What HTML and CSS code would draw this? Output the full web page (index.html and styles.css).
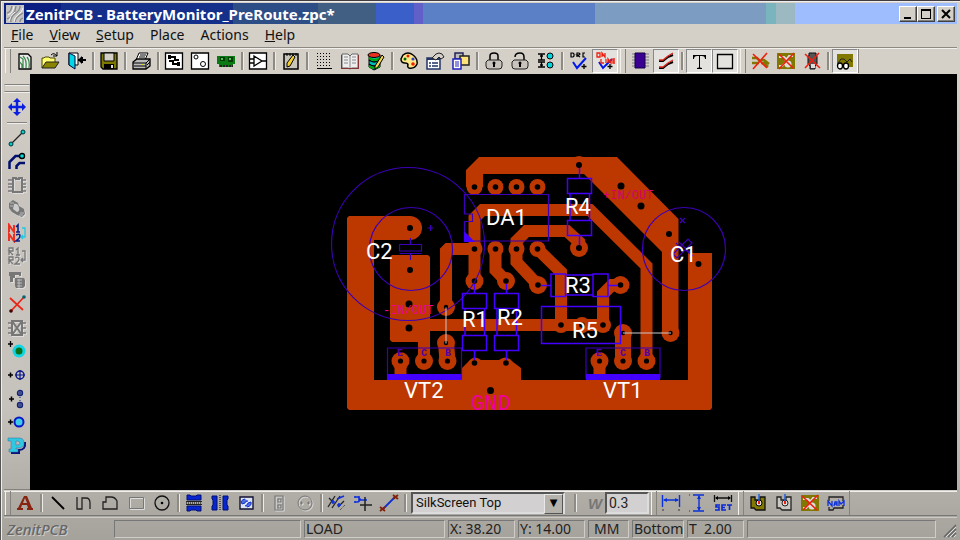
FILE: index.html
```html
<!DOCTYPE html>
<html lang="en">
<head>
<meta charset="utf-8">
<title>ZenitPCB - BatteryMonitor_PreRoute.zpc*</title>
<link rel="stylesheet" href="styles.css">
</head>
<body>
<div class="window">
  <header class="titlebar">
    <svg class="logo" viewBox="0 0 18 18"><path fill="#c4c4c4" d="M0 0h18v18H0z"/><path d="M1 8Q5 7 6 1M1 14Q9 11 10 1M5 17Q4 12 10 8Q14 5 14 1M9 17Q10 12 17 8M14 17Q14 14 17 13" fill="none" stroke="#888" stroke-width="1.300"/><path d="M2 10Q7 8 8 1M3 16Q4 11 9 7M8 17Q8 12 13 9Q16 7 17 3" fill="none" stroke="#f4f4f4" stroke-width="1"/></svg>
    <h1>ZenitPCB - BatteryMonitor_PreRoute.zpc*</h1>
    <div class="winbtns">
      <button aria-label="Minimize"><svg viewBox="0 0 14 12"><path d="M3 9h7v2H3z"/></svg></button>
      <button aria-label="Maximize"><svg viewBox="0 0 14 12"><path d="M2 1h10v10H2zM3 3v7h8V3z" fill-rule="evenodd"/></svg></button>
      <button aria-label="Close" class="close"><svg viewBox="0 0 14 12"><path d="M3 2l8 8M11 2l-8 8" stroke="#000" stroke-width="2"/></svg></button>
    </div>
  </header>
  <nav class="menu">
    <a href="#"><u>F</u>ile</a><a href="#"><u>V</u>iew</a><a href="#"><u>S</u>etup</a><a href="#">Place</a><a href="#">Actions</a><a href="#"><u>H</u>elp</a>
  </nav>
  <div class="toolbar top" role="toolbar" aria-label="Main">
    <span class="grip first"></span>
    <button aria-label="New"><svg viewBox="0 0 20 20"><path d="M4 3h9l3 3v12H4z" fill="#eee" stroke="#000" stroke-width="1.300"/><path d="M5 6l3 2v9M8 5q4 4 3 12M12 6q3 4 2 11M5 11l2 3v3" fill="none" stroke="#3f8a4c" stroke-width="1.300"/></svg></button>
    <button aria-label="Open"><svg viewBox="0 0 20 20"><path d="M1 17V7h2l1-1h4l1 1h5v4" fill="#ffff70" stroke="#4a4600"/><path d="M1 17l4-6h13l-4 6z" fill="#8a8400" stroke="#222"/><path d="M10 4q3-3 6 1M16 1v4h-4" fill="none" stroke="#000"/></svg></button>
    <button aria-label="Exit"><svg viewBox="0 0 20 20"><path d="M2 2h9v12H2z" fill="#fff" stroke="#000"/><path d="M2 2l6 3v13l-6-4z" fill="#00d8e8" stroke="#003"/><path d="M11 9h8M15 6v6" stroke="#000" stroke-width="2"/><path d="M11 9l4-4v8z"/></svg></button>
    <span class="sep narrow"></span>
    <button aria-label="Save"><svg viewBox="0 0 20 20"><path d="M2 2h16v16H4l-2-2z" fill="#7c7800" stroke="#000" stroke-width="1.300"/><path d="M5 2h10v8H5z" fill="#d4d0c8" stroke="#000"/><path d="M5 13h10v5H5z"/><path d="M12 14h2v3h-2z" fill="#ddd"/></svg></button>
    <span class="sep"></span>
    <button aria-label="Print"><svg viewBox="0 0 20 20"><path d="M7 2h9l-3 7H4z" fill="#fff" stroke="#000"/><path d="M8 4h6M7 6h6" stroke="#000"/><path d="M1 11l4-3h13v7l-4 3H1z" fill="#bbb" stroke="#000" stroke-width="1.300"/><path d="M1 12h13l4-4M14 12v6M2 15h12M15 14l3-3" fill="none" stroke="#000"/><path d="M9 13h3v1H9z" fill="#dd0"/></svg></button>
    <span class="sep narrow"></span>
    <button aria-label="Tracks view"><svg viewBox="0 0 20 20"><path d="M1.500 2h17v16h-17z" fill="#fff" stroke="#000" stroke-width="1.300"/><path d="M4 6h7v3h4M5 10h4v3h6" fill="none" stroke="#000" stroke-width="2"/><path d="M4 4h3v4H4zM13 11h3v4h-3z"/></svg></button>
    <button aria-label="Pads view"><svg viewBox="0 0 20 20"><path d="M1.500 2h17v16h-17z" fill="#fff" stroke="#000" stroke-width="1.300"/><circle cx="6" cy="6" r="2" fill="none" stroke="#000"/><circle cx="13" cy="13" r="2.500" fill="none" stroke="#000"/></svg></button>
    <button aria-label="Board"><svg viewBox="0 0 20 20"><path d="M1 5h18v8h-2v3H3v-3H1z" fill="#0a7a14"/><path d="M4 6h5v4H4zM12 6h5v5h-5z" fill="#033d08"/><path d="M5 7h2v2H5zM13 7h2v2h-2z" fill="#5ac05a"/><path d="M4 15h13" stroke="#222" stroke-width="2" stroke-dasharray="2 1"/></svg></button>
    <span class="sep narrow"></span>
    <button aria-label="Schematic"><svg viewBox="0 0 20 20"><path d="M1.500 2h17v16h-17z" fill="#fff" stroke="#000" stroke-width="1.300"/><path d="M6 5l8 5-8 5zM2 8h4M2 12h4M14 10h4" fill="none" stroke="#000" stroke-width="1.300"/></svg></button>
    <span class="sep"></span>
    <button aria-label="Edit"><svg viewBox="0 0 20 20"><path d="M3 3h14v15H3z" fill="#c9c5bc" stroke="#000" stroke-width="1.500"/><path d="M6 2v3M9 2v3M12 2v3M15 2v3" stroke="#000"/><path d="M12 4l2 2-5 9-3 1 0-4z" fill="#f3cf30" stroke="#000"/></svg></button>
    <span class="sep"></span>
    <button aria-label="Grid"><svg viewBox="0 0 20 20" shape-rendering="crispEdges"><path d="M3 2.500h15M3 5.500h15M3 8.500h15M3 11.500h15M3 14.500h15" stroke="#000" stroke-dasharray="1 2"/><path d="M3 17.500h15" stroke="#000"/></svg></button>
    <button aria-label="Library"><svg viewBox="0 0 20 20"><path d="M2 3h6l2 2 2-2h6v14h-6l-2 1-2-1H2z" fill="#eee" stroke="#666"/><path d="M10 5v12M4 6h4M4 9h4M4 12h4M12 6h4M12 9h4M12 12h4" stroke="#888"/><path d="M1 17.500h18M1.500 4v14M18.500 4v14" stroke="#833" fill="none"/></svg></button>
    <button aria-label="Library editor"><svg viewBox="0 0 20 20"><path d="M3 4v12l5 3 6-3V4z" fill="#0bb" stroke="#000"/><ellipse cx="8" cy="4" rx="6" ry="2.500" fill="#e83020" stroke="#000"/><path d="M3 7q5 4 11 0M3 15q5 4 11 0" fill="none" stroke="#0a0" stroke-width="2"/><path d="M3 9q5 4 11 0M3 13q5 4 11 0" fill="none" stroke="#000" stroke-width="1.300"/><path d="M16 4l2 2-6 10-3 2 0-3z" fill="#f5d550" stroke="#000"/></svg></button>
    <span class="sep"></span>
    <button aria-label="Colors"><svg viewBox="0 0 20 20"><path d="M4 4q5-4 10 0 5 4 4 9-2 5-8 4-2-1-1-3 0-2-3-2-4 0-4-4z" fill="#ffe88a" stroke="#000" stroke-width="1.500"/><circle cx="6" cy="8" r="1.500" fill="#060"/><circle cx="9" cy="5" r="1.500" fill="#e20"/><circle cx="14" cy="8" r="1.600" fill="#34c"/><circle cx="14" cy="13" r="1.800" fill="#e20"/></svg></button>
    <button aria-label="Properties"><svg viewBox="0 0 20 20"><path d="M2 7h13v11H2z" fill="#fff" stroke="#236" stroke-width="1.500"/><path d="M2 8h13" stroke="#236" stroke-width="2"/><path d="M4 12h2M7 12h6M4 15h2M7 15h6" stroke="#236" stroke-width="1.300"/><path d="M7 7l4-4q3-2 6 0l2 3-3 2-2-2-3 3z" fill="#d4d0c8" stroke="#222"/></svg></button>
    <button aria-label="Copy"><svg viewBox="0 0 20 20"><path d="M4 2h8v6H4z" fill="#bbb" stroke="#225" stroke-width="1.500"/><path d="M9 5h9v9H9z" fill="#ffe37a" stroke="#222" stroke-width="1.500"/><path d="M2 8h8v10H2z" fill="#fff" stroke="#22b" stroke-width="1.500"/><path d="M4 11h4M4 13h4M4 15h4" stroke="#22b"/></svg></button>
    <span class="sep"></span>
    <button aria-label="Lock"><svg viewBox="0 0 20 20"><path d="M6 9V5q0-3 4-3t4 3v4" fill="none" stroke="#000" stroke-width="1.500"/><path d="M4 9h12l2 2v4q0 3-3 3H5q-3 0-3-3v-4z" fill="#c8c4bc" stroke="#222"/><circle cx="10" cy="12" r="1.500"/><path d="M9 12h2v4H9z"/></svg></button>
    <button aria-label="Unlock"><svg viewBox="0 0 20 20"><path d="M5 6q0-4 5-4 4 0 4 4v3" fill="none" stroke="#000" stroke-width="1.500"/><path d="M4 9h12l2 2v4q0 3-3 3H5q-3 0-3-3v-4z" fill="#c8c4bc" stroke="#222"/><circle cx="10" cy="12" r="1.500"/><path d="M9 12h2v4H9z"/></svg></button>
    <button aria-label="Clearance"><svg viewBox="0 0 20 20"><path d="M2 3h7M2 9h7M2 11h7M2 16h7M5.500 3v6M5.500 11v5M4 5h3M4 14h3" stroke="#000" stroke-width="1.300"/><circle cx="14" cy="5" r="3" fill="#00d5df" stroke="#000"/><circle cx="14" cy="14" r="3" fill="#00d5df" stroke="#000"/></svg></button>
    <span class="sep"></span>
    <button aria-label="Design rule check"><svg viewBox="0 0 20 20"><path d="M2 2v4h2l1-1V3L4 2zM8 6V2h2l1 1-1 1H8l3 2M16 2h-2v4h2" fill="none" stroke="#000" stroke-width="1.200"/><path d="M4 11l4 6 9-10" fill="none" stroke="#0018e8" stroke-width="2"/><path d="M15 13v5M12.500 15.500h5" stroke="#000" stroke-width="1.300"/></svg></button>
    <button aria-label="Online check" class="on"><svg viewBox="0 0 20 20"><path d="M4 11l4 6 9-9" fill="none" stroke="#0018e8" stroke-width="2"/><path d="M2 2h3v4H2zM7 6V2l3 4V2M6 8v4h3M11 8v4M13 12V8l3 4V8M20 8h-2v4h2M18 10h2" fill="none" stroke="#f02010" stroke-width="1.300"/><path d="M15 13v5M12.500 15.500h5" stroke="#000" stroke-width="1.300"/></svg></button>
    <span class="grip"></span>
    <button aria-label="Component side"><svg viewBox="0 0 20 20"><path d="M2 3h17M2 6h17M2 9h17M2 12h17M2 15h17" stroke="#999" stroke-width="1.500"/><path d="M5 2h10v15H5z" fill="#3a0092" stroke="#15004a"/></svg></button>
    <button aria-label="Tracks" class="on"><svg viewBox="0 0 20 20"><path d="M3 10h4l5-4 5-2M3 17h4l5-4 5-2" fill="none" stroke="#000" stroke-width="2"/><path d="M3 9h4l5-4 5-3M3 16h4l5-4 5-3" fill="none" stroke="#e02818" stroke-width="1.300"/></svg></button>
    <span class="sep"></span>
    <button aria-label="Text" class="on"><svg viewBox="0 0 20 20"><path d="M4 4h13v4h-1q0-3-3-3h-2v11q0 1 2 1v1H8v-1q2 0 2-1V5H8Q5 5 5 8H4z"/></svg></button>
    <button aria-label="Outline" class="on"><svg viewBox="0 0 20 20"><path d="M2.500 3.500h15v14h-15z" fill="none" stroke="#000" stroke-width="1.300"/></svg></button>
    <span class="grip"></span>
    <button aria-label="Remove tracks"><svg viewBox="0 0 20 20"><path d="M2 7h5l3 3M2 12h7M11 9h3l5 4M11 12h3l4 4" fill="none" stroke="#807800" stroke-width="2.500"/><path d="M3 3l14 14M17 2L3 18" stroke="#f02010" stroke-width="1.600"/></svg></button>
    <button aria-label="Remove fill"><svg viewBox="0 0 20 20"><path d="M1 2h18v16H1z" fill="#807800"/><path d="M3 6h5l3 3M17 5h-4l-4 5M3 15h3l3-3" stroke="#ddd" stroke-width="2" fill="none"/><circle cx="12" cy="13" r="3.500" fill="#ddd"/><path d="M3 3l14 14M18 2L3 18" stroke="#f02010" stroke-width="1.600"/></svg></button>
    <button aria-label="Remove component"><svg viewBox="0 0 20 20"><path d="M7 2h7v3h1v8l-2 2v3H8v-3l-2-2V5h1z" fill="#555" stroke="#111"/><path d="M9 13h4v4H9z" fill="#ddd"/><path d="M3 3l15 14M17 2L3 17" stroke="#f02010" stroke-width="1.600"/></svg></button>
    <span class="sep"></span>
    <button aria-label="Find" class="on"><svg viewBox="0 0 20 20"><path d="M2 3h16v13H2z" fill="#807800"/><path d="M3 12l3-4h3l3 3 3-3 2 3" fill="none" stroke="#222"/><ellipse cx="5" cy="15" rx="2.500" ry="3" fill="#fff" stroke="#000" stroke-width="1.300"/><ellipse cx="11" cy="15" rx="2.500" ry="3" fill="#fff" stroke="#000" stroke-width="1.300"/></svg></button>
    <span class="endline"></span>
  </div>

  <div class="workspace">
    <aside class="sidebar" role="toolbar" aria-label="Drawing">
      <span class="hgrip"></span>
      <button aria-label="Move"><svg viewBox="0 0 20 20"><path d="M10 4v12M4 10h12" stroke="#0a20e0" stroke-width="2.500"/><path d="M10 1l4 4H6zM10 19l4-4H6zM1 10l4-4v8zM19 10l-4-4v8z" fill="#0a20e0"/></svg></button>
      <span class="hsep"></span>
      <div class="tools">
        <button aria-label="Connection"><svg viewBox="0 0 20 20"><path d="M4 16L16 4" stroke="#222" stroke-width="1.300"/><circle cx="4" cy="16" r="2" fill="#0cc" stroke="#033"/><circle cx="16" cy="4" r="2" fill="#0cc" stroke="#033"/></svg></button>
        <button aria-label="Route"><svg viewBox="0 0 20 20"><path d="M2.500 17v-7l6-6H14M9.500 17v-3l3-3H18" fill="none" stroke="#00106c" stroke-width="2.500"/><circle cx="15" cy="4" r="2.500" fill="#0dd" stroke="#000" stroke-width="1.400"/></svg></button>
        <button aria-label="Component" disabled><svg viewBox="0 0 20 20"><path d="M6 3h3v1h3V3h3v14H6z" fill="none" stroke="#777" stroke-width="2"/><path d="M1 5h4M1 9h4M1 12h4M1 16h4M16 5h3M16 9h3M16 12h3M16 16h3" stroke="#777" stroke-width="1.500"/></svg></button>
        <button aria-label="Rotate" disabled><svg viewBox="0 0 20 20"><path d="M2 4l4-3 5 3 1 3 5 3 1 5-3 3-5-2-5-3-3-4z" fill="#777"/><path d="M7 5q4-1 5 4 1 3-2 4l-4-3z" fill="#ccc"/><path d="M3 4h4M3 7h3M13 14h4M12 16h4" stroke="#bbb"/></svg></button>
        <button aria-label="Rename net"><svg viewBox="0 0 20 20"><path d="M2 9V2l5 7V2M2 18v-7l5 7v-7" fill="none" stroke="#ef3020" stroke-width="2"/><path d="M9 4l2-2v7M9 9h4M9 12q4-2 4 1 0 2-4 5h4" fill="none" stroke="#0a2088" stroke-width="1.600"/><path d="M15 5h3v9h-4M16 12l-2 2 2 2" fill="none" stroke="#20c8e0" stroke-width="1.300"/></svg></button>
        <button aria-label="Rename component" disabled><svg viewBox="0 0 20 20"><path d="M2 9V2h4v3H2l4 4M9 4l2-2v7M9 9h4M2 18v-7h4v3H2l4 4M8 12q4-2 4 1 0 2-4 5h5M15 5h3v9h-4M16 12l-2 2 2 2" fill="none" stroke="#777" stroke-width="1.300"/></svg></button>
        <button aria-label="Change package" disabled><svg viewBox="0 0 20 20"><path d="M2 2h12v4h-2V5H8v3H6v4H3V6H2z" fill="#777"/><path d="M8 8h9l1 2v6l-2 2H9l-1-2z" fill="#777"/><path d="M10 10h5M10 13h5M10 16h5M12 9v9" stroke="#bbb"/></svg></button>
        <button aria-label="Delete track"><svg viewBox="0 0 20 20"><path d="M3 4l13 12M17 3L4 17" stroke="#e8281a" stroke-width="1.800"/><circle cx="17" cy="3" r="1.800" fill="#067"/><circle cx="4" cy="17" r="1.800" fill="#400"/></svg></button>
        <button aria-label="Delete component" disabled><svg viewBox="0 0 20 20"><path d="M5 3h10v14H5zM5 3l10 14M15 3L5 17" fill="none" stroke="#777" stroke-width="2"/><path d="M1 5h4M1 10h4M1 15h4M15 5h4M15 10h4M15 15h4" stroke="#777" stroke-width="1.500"/></svg></button>
        <button aria-label="Add pad"><svg viewBox="0 0 20 20"><path d="M1 3h5M3.500 0v6" stroke="#000" stroke-width="1.300"/><circle cx="12" cy="10" r="5" fill="#087018" stroke="#10d5e5" stroke-width="3"/></svg></button>
        <button aria-label="Add via"><svg viewBox="0 0 20 20"><path d="M1 10h5M3.500 7.500v5" stroke="#000" stroke-width="1.500"/><circle cx="13" cy="10" r="4" fill="none" stroke="#0a1888" stroke-width="1.500"/><path d="M13 5v10M8 10h10" stroke="#0a1888" stroke-width="1.200"/></svg></button>
        <button aria-label="Add jumper"><svg viewBox="0 0 20 20"><path d="M2 10h5M4.500 7.500v5" stroke="#000" stroke-width="1.500"/><path d="M13 1v5M13 8v1M13 11v1M13 14v5M10 4h6M10 16h6" stroke="#127"/><circle cx="13" cy="4" r="2.500" fill="none" stroke="#127" stroke-width="1.400"/><circle cx="13" cy="16" r="2.500" fill="none" stroke="#127" stroke-width="1.400"/></svg></button>
        <button aria-label="Add hole"><svg viewBox="0 0 20 20"><path d="M1 10h5M3.500 7.500v5" stroke="#000" stroke-width="1.500"/><circle cx="12" cy="10" r="4.500" fill="#40cce8" stroke="#0818c8" stroke-width="2"/></svg></button>
        <button aria-label="Power plane"><svg viewBox="0 0 20 20"><path d="M4 17h8v-3q7 0 6-8" fill="none" stroke="#08147c" stroke-width="2"/><path d="M1 2h11q5 0 5 5 0 5-6 5H9v1h2v3H2v-3h2V5H1zM9 5v4h1q3 0 3-2t-3-2z" fill="#30c8e0" stroke="#3468a0" stroke-width=".5" fill-rule="evenodd"/></svg></button>
      </div>
    </aside>
    <main class="board">
      <svg viewBox="30 74 927 416" role="img" aria-label="Board layout">
        <g fill="#bd3700">
          <path d="M349 216H410a12 12 0 0 1 0 24H374V380H688V253H712V408l-2 2H349l-2-2V218z"/>
          <path d="M462 381V368l6-6q6-8 13-2h18q7-6 14 2l8 6v13z"/>
          <path d="M390 257l2-2h36l2 2V361H418V342H392l-2-2z"/>
          <path d="M479 157H617l61.500 62V333H662V252L584 174H483v13H466V170z"/>
          <circle cx="474.500" cy="187" r="8"/><circle cx="670.500" cy="333" r="9"/><circle cx="579" cy="165" r="9"/>
          <circle cx="495.500" cy="187" r="8"/><circle cx="516.500" cy="187" r="8"/><circle cx="537.500" cy="187" r="8"/>
          <circle cx="474.500" cy="249" r="8"/><circle cx="495.500" cy="249" r="8"/><circle cx="516.500" cy="249" r="8"/><circle cx="537.500" cy="249" r="8"/>
          <circle cx="474.500" cy="281" r="9"/><circle cx="506" cy="281" r="9"/><circle cx="538" cy="285" r="9"/><circle cx="620.500" cy="285" r="9"/><circle cx="579" cy="248" r="9"/>
          <circle cx="446" cy="307" r="9"/><circle cx="446" cy="343" r="9"/><circle cx="623" cy="333" r="9"/>
          <circle cx="561" cy="325" r="8"/><circle cx="582" cy="325" r="8"/><circle cx="603" cy="325" r="8"/>
          <circle cx="400.500" cy="361" r="9"/><circle cx="424" cy="361" r="9"/><circle cx="447.500" cy="361" r="9"/>
          <circle cx="599.500" cy="361" r="9"/><circle cx="623" cy="361" r="9"/><circle cx="646.500" cy="361" r="9"/>
        </g>
        <g fill="none" stroke="#bd3700" stroke-width="12">
          <path d="M474.500 281V249H448l-2 2V307"/><path d="M430 325H603V294l9-9h8"/>
          <path d="M474.500 244V218l8-8H590L646.500 266V361"/><path d="M495.500 249V270L506 281"/>
          <path d="M538 285L516.500 262V241l10-10H567l12 11v6"/><path d="M537.500 249L561 272V325"/>
          <path d="M400.500 361v22M599.500 361v22"/><path stroke-width="16" d="M446 343l1.500 18M623 333V361"/>
        </g>
        <g>
          <circle cx="410" cy="228" r="3"/><circle cx="410" cy="270" r="3"/><circle cx="409" cy="304" r="3.500"/><circle cx="409" cy="328" r="3.500"/><circle cx="490.500" cy="390.500" r="3.500"/>
          <circle cx="621" cy="186" r="3.500"/><circle cx="641" cy="206" r="3.500"/><circle cx="669" cy="234" r="3"/><circle cx="698.500" cy="264" r="3"/><circle cx="579" cy="165" r="3"/><circle cx="579" cy="248" r="3"/>
          <circle cx="474.500" cy="187" r="2.800"/><circle cx="495.500" cy="187" r="2.800"/><circle cx="516.500" cy="187" r="2.800"/><circle cx="537.500" cy="187" r="2.800"/>
          <circle cx="474.500" cy="249" r="2.800"/><circle cx="495.500" cy="249" r="2.800"/><circle cx="516.500" cy="249" r="2.800"/><circle cx="537.500" cy="249" r="2.800"/>
          <circle cx="474.500" cy="281" r="2.800"/><circle cx="506" cy="281" r="2.800"/><circle cx="538" cy="285" r="2.800"/><circle cx="620.500" cy="285" r="2.800"/>
          <circle cx="474.500" cy="363" r="2.800"/><circle cx="506" cy="363" r="2.800"/><circle cx="561" cy="325" r="2.800"/><circle cx="582" cy="325" r="2.800"/><circle cx="603" cy="325" r="2.800"/>
          <circle cx="400.500" cy="361" r="2.600"/><circle cx="424" cy="361" r="2.600"/><circle cx="447.500" cy="361" r="2.600"/><circle cx="599.500" cy="361" r="2.600"/><circle cx="623" cy="361" r="2.600"/><circle cx="646.500" cy="361" r="2.600"/>
          <circle cx="446" cy="307" r="2.200"/><circle cx="446" cy="343" r="2.200"/><circle cx="623" cy="333" r="2.200"/><circle cx="670.500" cy="333" r="2.200"/>
        </g>
        <g fill="none" stroke="#3c00b8" stroke-width="1.200">
          <circle cx="408" cy="244" r="76.500"/><circle cx="411" cy="249" r="41.500"/><circle cx="684" cy="249" r="41.500"/>
          <path d="M464.500 194.500h84v46.500h-84v-19.500h8v-7.500h-8zM387.500 348h74v30h-74zM586 348h74v30h-74z"/>
          <path d="M399.500 244.500h22v6.500h-22zM399.500 253.500h22M410.500 238v6M410.500 253v7M427.500 228h6M430.500 225v6M680 218l5 5M685 218l-5 5"/>
          <path d="M673 254l15-15 4 4-15 15zM676 243l5 5M686 250l4 4M679 242l14 14"/>
        </g>
        <g fill="none" stroke="#4400ff" stroke-width="1.500">
          <path d="M567.500 178.500h24v15h-24zM570 193.500v27M589.500 193.500v27M567.500 220.500h24v15h-24zM579.500 168v10M579.500 236v9"/>
          <path d="M462.500 293.500h24v15h-24zM465 308.500v27M484.500 308.500v27M462.500 335.500h24v15h-24zM474.500 284v9M474.500 351v9"/>
          <path d="M494.500 293.500h24v15h-24zM497 308.500v27M516.500 308.500v27M494.500 335.500h24v15h-24zM506.500 284v9M506.500 351v9"/>
          <path d="M551 274h14.500v22.500h-14.500zM565.500 275h28M565.500 295h28M593 274h15v22.500h-15zM541 285.500h10M608 285.500h10M541.500 306.500h79v37h-79z"/>
        </g>
        <path fill="#4400ff" d="M464 231l11 11h-11zM387 374h75v6h-75zM586 374h74v6h-74z"/>
        <path stroke="#cfc8c8" d="M446 307.500v36M623 333h48"/>
        <g class="pin"><text x="397" y="356">E</text><text x="421" y="356">C</text><text x="445" y="356">B</text><text x="596" y="356">E</text><text x="620" y="356">C</text><text x="644" y="356">B</text></g>
        <text class="net bright" x="383" y="314">-IN/OUT</text><text class="net" x="603" y="199">+IN/OUT</text>
        <text class="gnd" x="471" y="410">GND</text>
        <g class="ref"><text x="486" y="225">DA1</text><text x="565" y="214">R4</text><text x="366" y="259">C2</text><text x="670" y="262">C1</text><text x="565" y="293">R3</text><text x="462" y="327">R1</text><text x="497" y="325">R2</text><text x="572" y="338">R5</text><text x="404" y="398">VT2</text><text x="603" y="398">VT1</text></g>
      </svg>
    </main>
  </div>

  <div class="toolbar bottom" role="toolbar" aria-label="Placement">
    <span class="grip first"></span>
    <button aria-label="Place text"><svg viewBox="0 0 20 20"><path d="M9 3h3l5 12h1v2h-6v-2h1l-1-3H7l-1 3h2v2H2v-2h1zM8 10h4l-2-5z" fill="#862410" fill-rule="evenodd"/></svg></button>
    <span class="sep"></span>
    <button aria-label="Line"><svg viewBox="0 0 20 20"><path d="M4 4l12 12" stroke="#000" stroke-width="1.800"/></svg></button>
    <button aria-label="Polyline"><svg viewBox="0 0 20 20"><path d="M3 4v12h5V5h4q4 0 4 5v6" fill="none" stroke="#222" stroke-width="1.300"/></svg></button>
    <button aria-label="Polygon"><svg viewBox="0 0 20 20"><path d="M3 16V9h3V4h5q4 0 6 4v8z" fill="none" stroke="#222" stroke-width="1.300"/></svg></button>
    <button aria-label="Rectangle" disabled><svg viewBox="0 0 20 20"><path d="M3.500 4.500h14v11h-14z" fill="none" stroke="#777"/></svg></button>
    <button aria-label="Circle"><svg viewBox="0 0 20 20"><circle cx="10" cy="10" r="7" fill="none" stroke="#111" stroke-width="1.300"/><circle cx="10" cy="10" r="1.300"/></svg></button>
    <span class="sep narrow"></span>
    <button aria-label="Mirror vertical"><svg viewBox="0 0 20 20"><path d="M3 2h3l1 1h5l1-1h4v5H3zM3 13h14v5h-4l-1-1H7l-1 1H3z" fill="#0825d0" stroke="#001070"/><path d="M2 10h16" stroke="#000" stroke-dasharray="1 1"/><path d="M2 8.500h16M2 11.500h16" stroke="#222"/></svg></button>
    <button aria-label="Mirror horizontal"><svg viewBox="0 0 20 20"><path d="M2 3v3l1 1v5l-1 1v4h5V3zM13 3v14h5v-4l-1-1V7l1-1V3z" fill="#0825d0" stroke="#001070"/><path d="M10 2v16" stroke="#000" stroke-dasharray="1 1"/></svg></button>
    <button aria-label="Rotate selection"><svg viewBox="0 0 20 20"><path d="M4 4h13v12H4z" fill="#dce4f4" stroke="#113" stroke-width="1.400"/><path d="M9 6q-5 1-3 5l3-1q0-2 3-2M11 14q5-1 4-5l-3 1q0 2-3 3" fill="#5070e0" stroke="#1030d0"/></svg></button>
    <span class="sep"></span>
    <button aria-label="Array" disabled><svg viewBox="0 0 20 20"><path d="M6 3h8v14H6zM9 6h3v3H9zM9 12h3v3H9z" fill="none" stroke="#777" stroke-width="1.200"/></svg></button>
    <button aria-label="Circular array" disabled><svg viewBox="0 0 20 20"><circle cx="10" cy="10" r="7" fill="none" stroke="#777"/><path d="M5 10h3M12 10h3M6.500 8.500v3M13.500 8.500v3" stroke="#777"/></svg></button>
    <span class="sep narrow"></span>
    <button aria-label="Break"><svg viewBox="0 0 20 20"><path d="M1 14L8 3M5 15l8-12M2 5l3 3M11 14l6-6" stroke="#222" stroke-width="1.300"/><path d="M4 9h4M6 7v4M10 12h4M12 10v4M10 6l7-3" stroke="#1030e0" stroke-width="1.600"/><path d="M13 17l5-5" stroke="#333" stroke-dasharray="1 1"/></svg></button>
    <button aria-label="Cut"><svg viewBox="0 0 20 20"><path d="M2 4h3l3 3h6M2 9h3l3-3M2 3v2M2 8v2M6 3v6" fill="none" stroke="#1030e0" stroke-width="1.600"/><path d="M12 4v14M7 12h12" stroke="#222" stroke-width="1.500"/></svg></button>
    <button aria-label="Measure"><svg viewBox="0 0 20 20"><path d="M4 16L16 4" stroke="#1030d0" stroke-width="1.800"/><path d="M1 14l5 4M6 14l-5 4M14 2l5 4M19 2l-5 4" stroke="#832008" stroke-width="1.800"/></svg></button>
    <span class="sep"></span>
    <div class="combo"><select aria-label="Layer"><option>SilkScreen Top</option></select></div>
    <span class="sep spaced"></span>
    <label class="wlabel" for="width">W</label>
    <input id="width" type="text" value="0.3">
    <span class="grip"></span>
    <button aria-label="Horizontal dimension"><svg viewBox="0 0 20 20"><path d="M1.500 2v12M18.500 2v12M3 7h14" stroke="#0a30d8" stroke-width="1.400"/><path d="M2 7l4-2v4zM18 7l-4-2v4z" fill="#0a30d8"/><path d="M1 17h2M17 17h2" stroke="#333"/></svg></button>
    <button aria-label="Vertical dimension"><svg viewBox="0 0 20 20"><path d="M6 2h11M6 18h11M12 3v14" stroke="#0a30d8" stroke-width="1.400"/><path d="M12 2l2 4h-4zM12 18l2-4h-4z" fill="#0a30d8"/><path d="M2 2h1M2 18h1" stroke="#333"/></svg></button>
    <button aria-label="Dimension settings"><svg viewBox="0 0 20 20"><path d="M1.500 2v7M18.500 2v7M3 5h14" stroke="#111" stroke-width="1.300"/><path d="M2 5l3-2v4zM18 5l-3-2v4z"/><path d="M7 12H3v2h3v3H2M13 12H9v5h4M9 14.500h3M14 12h5M16.500 12v5" fill="none" stroke="#0828d8" stroke-width="1.600"/></svg></button>
    <span class="grip"></span>
    <button aria-label="Fill area"><svg viewBox="0 0 20 20"><path d="M3 4h4v3h5V4h5v13h-9l-2-2H3z" fill="#807800" stroke="#111" stroke-width="1.300"/><circle cx="11" cy="10" r="3" fill="#ddd" stroke="#000"/><path d="M11 1v7" stroke="#2060e0" stroke-width="1.500"/><path d="M11 8v3" stroke="#e21" stroke-width="2"/></svg></button>
    <button aria-label="Empty area"><svg viewBox="0 0 20 20"><path d="M3 4h4v3h5V4h5v13h-9l-2-2H3z" fill="#cbc8c2" stroke="#222" stroke-width="1.300"/><circle cx="11" cy="10" r="3" fill="#ddd" stroke="#222"/><path d="M11 1v7" stroke="#2060e0" stroke-width="1.500"/><path d="M11 8v3" stroke="#e21" stroke-width="2"/></svg></button>
    <button aria-label="Delete area"><svg viewBox="0 0 20 20"><path d="M1 2h18v16H1z" fill="#807800"/><path d="M3 6h5l3 3M17 5h-4l-4 5M3 15h3l3-3" stroke="#ddd" stroke-width="2" fill="none"/><circle cx="12" cy="13" r="3.500" fill="#ddd"/><path d="M2 3l15 14M18 2L3 17" stroke="#f02010" stroke-width="1.600"/></svg></button>
    <button aria-label="Name area"><svg viewBox="0 0 20 20"><path d="M3 8V4h14v4M3 14v3h4l1-2h9v-3" fill="none" stroke="#222" stroke-width="1.300"/><path d="M2 13V8l4 5V8M8 13l1-4h2v4M8 11h3M13 13V8l2 3 3-3v5" fill="none" stroke="#0a30e0" stroke-width="1.300"/></svg></button>
    <span class="endline"></span>
  </div>

  <footer class="status">
    <span class="brand">ZenitPCB</span>
    <span class="cell message"></span><span class="cell mode">LOAD</span><span class="cell coord">X: 38.20</span><span class="cell coord">Y: 14.00</span><span class="cell unit">MM</span><span class="cell side">Bottom</span><span class="cell track">T&nbsp; 2.00</span><span class="cell info"></span>
    <svg class="resize" viewBox="0 0 14 14"><path d="M1 13L13 1M5 13l8-8M9 13l4-4" stroke="#666" stroke-width="1.500"/><path d="M3 13L13 3M7 13l6-6M11 13l2-2" stroke="#ddd"/></svg>
  </footer>
</div>
</body>
</html>
```
FILE: styles.css
```css
* { box-sizing: border-box; }
body { margin: 0; font-family: "Noto Sans", "DejaVu Sans", sans-serif; }
button, input, select { font: inherit; margin: 0; padding: 0; border: 0; border-radius: 0; background: none; color: inherit; }
.window {
  display: flex;
  flex-direction: column;
  height: 100vh;
  padding: 1px 3px 1px 3px;
  background: linear-gradient(#d4d0c8 15%, #c9c5be 35%, #c6c2bc 75%, #b0ada7 92%, #a5a29c);
  border-top: 1px solid #403c40;
  border-left: 1px solid #555;
  box-shadow: inset 1px 1px #eee;
}
.titlebar {
  display: flex;
  align-items: center;
  height: 21px;
  margin-top: 1px;
  padding-left: 2px;
  flex: none;
  background: linear-gradient(90deg, #0b1f82 0 6%, #14308a 6% 24%, #2d4d86 24% 33%, #415f82 33% 39%, #3a5fc8 39% 43%, #6060c8 43% 44%, #5b80c5 44% 62%, #7d9cc2 62% 80%, #7ab5bd 80% 81%, #9cb8c0 81% 83%, #9dbdff 83%);
}
.logo { width: 18px; height: 18px; margin-right: 2px; }
.titlebar h1 { margin: 0; font-size: 15px; line-height: 20px; font-weight: 700; color: #fff; flex: 1; white-space: nowrap; }
.winbtns { display: flex; padding-right: 2px; }
.winbtns button {
  width: 18px; height: 16px;
  display: flex; align-items: center; justify-content: center;
  background: #d4d0c8;
  border: 1px solid; border-color: #fff #404040 #404040 #fff;
  box-shadow: inset -1px -1px #808080;
}
.winbtns svg { width: 14px; height: 12px; }
.winbtns .close { margin-left: 2px; }
.menu { display: flex; gap: 16px; height: 23px; padding-left: 7px; flex: none; font-size: 14px; line-height: 22px; }
.menu a { color: #111; text-decoration: none; }
.toolbar { display: flex; align-items: center; flex: none; height: 27px; border-top: 1px solid #8c8983; box-shadow: inset 0 1px #f2f0ec; }
.toolbar button { width: 26px; height: 24px; flex: none; display: flex; align-items: center; justify-content: center; }
.toolbar svg, .sidebar svg { width: 20px; height: 20px; display: block; flex: none; }
.toolbar .on { background: #e4e2de; border: 1px solid; border-color: #888 #fff #fff #888; }
.sep { width: 7px; height: 18px; flex: none; display: flex; justify-content: center; }
.sep.narrow { width: 6px; }
.sep::before { content: ""; width: 2px; background: #8e8b85; border-right: 1px solid #eeece8; }
.sep.spaced { width: 20px; }
.grip { width: 9px; height: 24px; flex: none; display: flex; justify-content: center; }
.grip::before { content: ""; width: 4px; border-left: 1px solid #f4f2ee; border-right: 1px solid #85827c; }
.grip.first { width: 8px; }
.endline { width: 2px; height: 24px; border-left: 1px solid #85827c; }
.workspace { display: flex; flex: 1; min-height: 0; }
.sidebar { width: 26px; flex: none; display: flex; flex-direction: column; align-items: center; border-bottom: 1px solid #85827c; }
.sidebar button { width: 26px; height: 24px; display: flex; align-items: center; justify-content: center; flex: none; }
.sidebar button:disabled svg, .bottom button:disabled svg { filter: drop-shadow(1px 1px #ddd); }
.hgrip { width: 26px; height: 8px; margin-top: 10px; border: 1px solid; border-color: #85827c #c8c4bd #85827c #c8c4bd; box-shadow: inset 0 1px #eee, 0 1px #eee; flex: none; }
.hsep { width: 20px; height: 2px; margin: 3px 0 2px; border-top: 1px solid #85827c; background: #eee; flex: none; }
.sidebar > button { margin-top: 3px; }
.tools { display: flex; flex-direction: column; height: 332px; }
.tools button { flex: 1 1 0; }
.board { flex: 1; min-width: 0; background: #000; }
.board svg { display: block; width: 100%; height: 100%; }
.ref text { font: 400 22px Roboto, sans-serif; fill: #fff; }
.gnd { font: 22px "Liberation Mono", monospace; fill: #f0009c; }
.net { font: 12px "Liberation Mono", monospace; fill: #d4006c; }
.net.bright { fill: #f00094; }
.pin text { font: 700 10px "Liberation Mono", monospace; fill: #5000a8; }
.bottom { height: 26px; border-top-color: #d0cdc8; border-bottom: 1px solid #777; }
.combo { position: relative; width: 154px; height: 22px; margin-left: 2px; border: 2px solid; border-color: #555 #ddd #ddd #555; background: #d2d0d0; }
.combo select { display: block; width: 100%; height: 18px; appearance: none; padding-left: 3px; font: 13px/18px Roboto, sans-serif; color: #111; }
.combo::after {
  content: "\25BC"; position: absolute; right: 0; top: 0; width: 17px; height: 18px;
  font: 10px/16px "DejaVu Sans", sans-serif; text-align: center; color: #000; pointer-events: none;
  background: #b5b2ac; border: 1px solid; border-color: #e8e8e8 #555 #555 #e8e8e8;
}
.wlabel { width: 20px; text-align: center; font: italic 700 15px "Liberation Sans", sans-serif; color: #777; }
.toolbar input { width: 44px; height: 22px; padding-left: 2px; font: 14px Roboto, sans-serif; color: #222; background: #d2d0d0; border: 2px solid; border-color: #555 #ddd #ddd #555; }
.status { display: flex; gap: 3px; flex: none; height: 22px; margin-top: 1px; padding-top: 2px; border-top: 1px solid #ccc9c4; font-size: 14px; line-height: 16px; color: #222; white-space: pre; }
.brand { width: 107px; padding-left: 3px; font-style: italic; font-weight: 500; font-size: 15px; line-height: 18px; color: #666; text-shadow: 1px 1px #ccc; }
.cell { height: 18px; padding-left: 1px; border: 1px solid; border-color: #777 #d0cdc8 #d0cdc8 #777; }
.message { width: 187px; }
.mode { width: 141px; }
.coord { width: 67px; }
.unit { width: 41px; padding-left: 5px; }
.side { width: 52px; }
.track { width: 57px; }
.info { flex: 1; }
.resize { width: 14px; height: 14px; margin: 4px 0 0 4px; }
```
